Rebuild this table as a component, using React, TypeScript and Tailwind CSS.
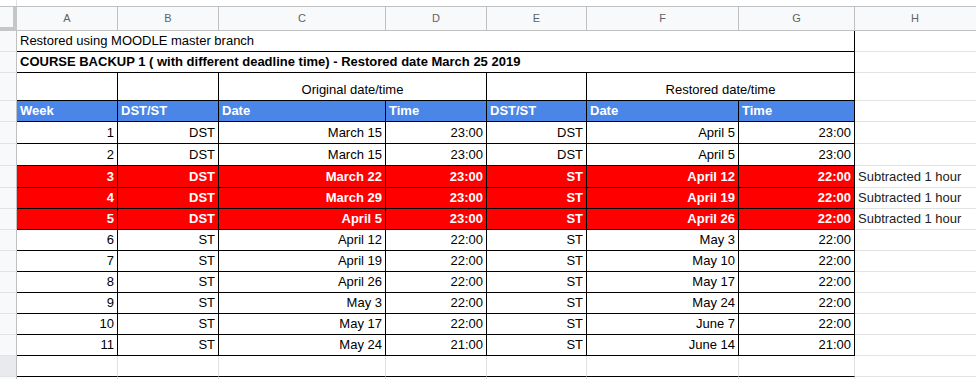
import React from 'react';

type WeekRow = {
  week: number;
  dst: string;
  date: string;
  time: string;
  dst2: string;
  date2: string;
  time2: string;
  red?: boolean;
};

const weeks: WeekRow[] = [
  { week: 1, dst: 'DST', date: 'March 15', time: '23:00', dst2: 'DST', date2: 'April 5', time2: '23:00' },
  { week: 2, dst: 'DST', date: 'March 15', time: '23:00', dst2: 'DST', date2: 'April 5', time2: '23:00' },
  { week: 3, dst: 'DST', date: 'March 22', time: '23:00', dst2: 'ST', date2: 'April 12', time2: '22:00', red: true },
  { week: 4, dst: 'DST', date: 'March 29', time: '23:00', dst2: 'ST', date2: 'April 19', time2: '22:00', red: true },
  { week: 5, dst: 'DST', date: 'April 5', time: '23:00', dst2: 'ST', date2: 'April 26', time2: '22:00', red: true },
  { week: 6, dst: 'ST', date: 'April 12', time: '22:00', dst2: 'ST', date2: 'May 3', time2: '22:00' },
  { week: 7, dst: 'ST', date: 'April 19', time: '22:00', dst2: 'ST', date2: 'May 10', time2: '22:00' },
  { week: 8, dst: 'ST', date: 'April 26', time: '22:00', dst2: 'ST', date2: 'May 17', time2: '22:00' },
  { week: 9, dst: 'ST', date: 'May 3', time: '22:00', dst2: 'ST', date2: 'May 24', time2: '22:00' },
  { week: 10, dst: 'ST', date: 'May 17', time: '22:00', dst2: 'ST', date2: 'June 7', time2: '22:00' },
  { week: 11, dst: 'ST', date: 'May 24', time: '21:00', dst2: 'ST', date2: 'June 14', time2: '21:00' },
];

const rowHeights = [
  'h-[22px]', 'h-[22px]', 'h-[22px]', 'h-[21px]', 'h-[21px]', 'h-[21px]',
  'h-[21px]', 'h-[21px]', 'h-[21px]', 'h-[21px]', 'h-[21px]',
];

// column widths incl. the right border pixel
const colW = ['w-[101px]', 'w-[101px]', 'w-[167px]', 'w-[101px]', 'w-[100px]', 'w-[152px]', 'w-[116px]'];
const letters = ['A', 'B', 'C', 'D', 'E', 'F', 'G'];

const cellBase = 'shrink-0 flex items-end px-[3px] pb-[3px] leading-[15px] whitespace-nowrap overflow-hidden';
const blackCell = 'border-r border-b border-black';
const gridCell = 'border-r border-b border-[#e2e2e2]';

const RowHead: React.FC<{ dark?: boolean }> = ({ dark }) => (
  <div
    className={`w-[17px] shrink-0 border-r border-b border-r-[#c0c0c0] border-b-[#e2e2e2] ${
      dark ? 'bg-[#e8eaed]' : 'bg-[#f8f9fa]'
    }`}
  />
);

const HCell: React.FC<{ text?: string }> = ({ text }) => (
  <div className={`flex-1 ${cellBase} border-b border-[#e2e2e2] text-[#222]`}>{text}</div>
);

export default function App() {
  return (
    <div className="w-[976px] h-[379px] overflow-hidden bg-white font-['Liberation_Sans',Arial,sans-serif] text-[13px] text-black">
      {/* strip above the sheet */}
      <div className="flex h-[6px]">
        <div className="w-[17px] shrink-0 border-r border-[#e2e2e2]" />
      </div>

      {/* column letters */}
      <div className="flex h-[25px] border-t border-[#c0c0c0] bg-[#f8f9fa]">
        <div className="w-[17px] shrink-0 bg-[#f8f9fa] border-r-4 border-b-4 border-[#c4c7c5]" />
        {letters.map((l, i) => (
          <div
            key={l}
            className={`${colW[i]} shrink-0 flex items-center justify-center border-r border-b border-[#c0c0c0] text-[11px] text-[#5f6368]`}
          >
            {l}
          </div>
        ))}
        <div className="flex-1 flex items-center justify-center border-b border-[#c0c0c0] text-[11px] text-[#5f6368] pr-[1px]">
          H
        </div>
      </div>

      {/* title rows */}
      <div className="flex h-[21px]">
        <RowHead />
        <div className={`w-[838px] ${cellBase} ${blackCell}`}>Restored using MOODLE master branch</div>
        <HCell />
      </div>
      <div className="flex h-[21px]">
        <RowHead />
        <div className={`w-[838px] ${cellBase} ${blackCell} font-bold`}>
          COURSE BACKUP 1 ( with different deadline time) - Restored date March 25 2019
        </div>
        <HCell />
      </div>

      {/* group headings */}
      <div className="flex h-[28px]">
        <RowHead />
        <div className={`w-[101px] ${cellBase} ${blackCell}`} />
        <div className={`w-[101px] ${cellBase} ${blackCell}`} />
        <div className={`w-[268px] ${cellBase} ${blackCell} justify-center`}>Original date/time</div>
        <div className={`w-[100px] ${cellBase} ${blackCell}`} />
        <div className={`w-[268px] ${cellBase} ${blackCell} justify-center`}>Restored date/time</div>
        <HCell />
      </div>

      {/* blue header */}
      <div className="flex h-[21px]">
        <RowHead />
        {['Week', 'DST/ST', 'Date', 'Time', 'DST/ST', 'Date', 'Time'].map((t, i) => (
          <div key={i} className={`${colW[i]} ${cellBase} ${blackCell} bg-[#4a86e8] text-white font-bold`}>
            {t}
          </div>
        ))}
        <HCell />
      </div>

      {/* data */}
      {weeks.map((w, r) => {
        const vals = [String(w.week), w.dst, w.date, w.time, w.dst2, w.date2, w.time2];
        return (
          <div key={w.week} className={`flex ${rowHeights[r]}`}>
            <RowHead />
            {vals.map((v, i) => (
              <div
                key={i}
                className={`${colW[i]} ${cellBase} ${blackCell} justify-end ${
                  w.red ? 'bg-[#ff0000] text-white font-bold' : ''
                }`}
              >
                {v}
              </div>
            ))}
            <HCell text={w.red ? 'Subtracted 1 hour' : undefined} />
          </div>
        );
      })}

      {/* empty row */}
      <div className="flex h-[21px]">
        <RowHead dark />
        {colW.map((c, i) => (
          <div key={i} className={`${c} shrink-0 ${gridCell} border-b-black`} />
        ))}
        <HCell />
      </div>
      <div className="flex h-[10px]">
        <RowHead />
        {colW.map((c, i) => (
          <div key={i} className={`${c} shrink-0 border-r border-[#e2e2e2]`} />
        ))}
        <div className="flex-1" />
      </div>
    </div>
  );
}
